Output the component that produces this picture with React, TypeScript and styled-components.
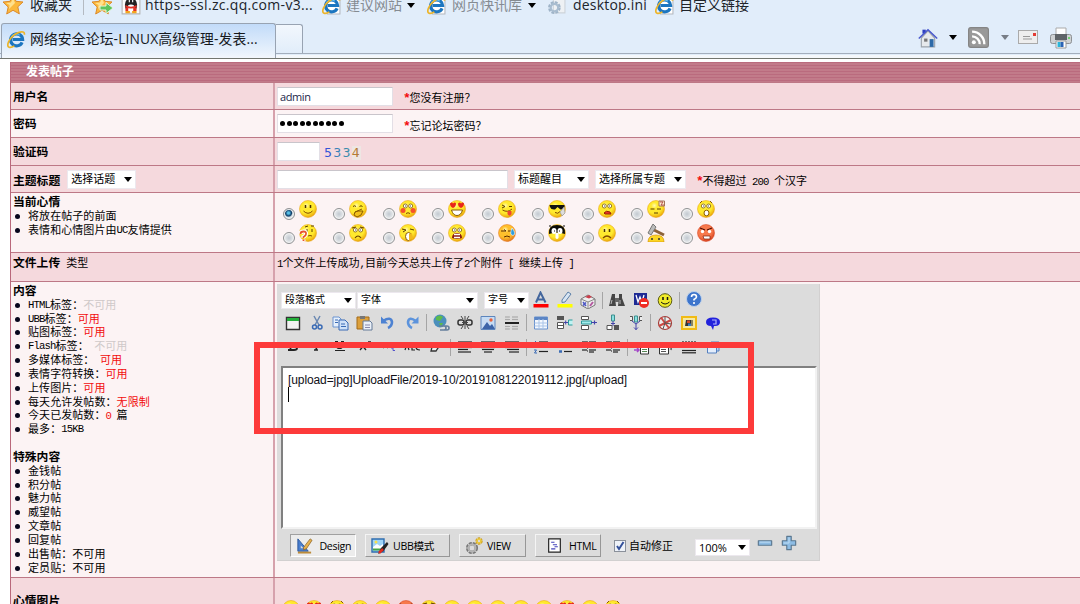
import React from 'react';
import styled, { createGlobalStyle } from 'styled-components';

const sans = '"Liberation Sans", "Noto Sans CJK SC", sans-serif';
const ui = '"Open Sans", "Noto Sans CJK SC", sans-serif';

const Global = createGlobalStyle`
  * { box-sizing: border-box; }
  body { margin: 0; background: #fff; overflow: hidden; }
  ul { margin: 0; padding: 0; list-style: none; }
`;

const Page = styled.div`
  position: relative;
  width: 1080px;
  height: 604px;
  overflow: hidden;
  display: flex;
  flex-direction: column;
  font: 11px/13.83px ${sans};
  color: #000;
`;

/* ---------- browser chrome ---------- */
const Chrome = styled.header`
  height: 59px;
  flex: none;
  display: flex;
  flex-direction: column;
  background: #e1edfa;
  border-bottom: 1px solid #72766f;
`;
const Bookmarks = styled.div`
  height: 23px;
  display: flex;
  padding-left: 3px;
  overflow: hidden;
`;
const Bookmark = styled.div<{ $w: number; $dim?: boolean; $gap?: number; $ls?: number }>`
  width: ${p => p.$w}px;
  flex: none;
  height: 20px;
  margin-top: -5px;
  display: flex;
  align-items: center;
  gap: ${p => p.$gap ?? 5}px;
  white-space: nowrap;
  font: 14px/20px ${ui};
  letter-spacing: ${p => p.$ls ?? 0}px;
  color: ${p => (p.$dim ? '#858b92' : '#20242a')};
  svg { flex: none; }
`;
const BarLine = styled.span`
  width: 1px;
  height: 15px;
  margin-right: 8px;
  background: #b4bac2;
`;
const Caret = styled.i<{ $c?: string }>`
  flex: none;
  width: 0;
  height: 0;
  border: 4.5px solid transparent;
  border-top: 5px solid ${p => p.$c ?? '#000'};
  border-bottom: 0;
`;
const TabBar = styled.div`
  height: 31px;
  display: flex;
  border-bottom: 1px solid #a3aebc;
`;
const Tab = styled.div`
  width: 275px;
  height: 35px;
  margin-left: 1px;
  display: flex;
  align-items: center;
  gap: 4px;
  padding: 0 0 4px 5px;
  border: 1px solid #98a3b2;
  border-bottom: 0;
  border-radius: 3px 3px 0 0;
  background: linear-gradient(#c2dbf9, #e9f2fc 85%, #f3f7fc);
  font: 13.8px/20px ${ui};
  letter-spacing: 0.13px;
  color: #16191d;
  white-space: nowrap;
`;
const NewTab = styled.div`
  width: 27px;
  height: 29px;
  margin-top: 1px;
  border: 1px solid #98a3b2;
  border-left: 0;
  border-bottom: 0;
  border-radius: 0 3px 0 0;
  background: linear-gradient(#f2f7fd, #e1edfa);
`;
const Commands = styled.div`
  margin-left: auto;
  display: flex;
  align-items: center;
  height: 29px;
  padding-right: 8px;
`;
const Spacer = styled.span<{ $w: number }>`
  flex: none;
  width: ${p => p.$w}px;
`;
const UnderTabs = styled.div`
  height: 3px;
  margin: 1px 0 0 276px;
  background: #f5f8fb;
`;

/* ---------- form table ---------- */
const Form = styled.main`
  margin: 3px 0 0 10px;
  border-left: 1px solid #b9687b;
  flex: 1;
  min-height: 0;
`;
const Banner = styled.div`
  height: 20px;
  padding-left: 15px;
  font: bold 12px/20px ${sans};
  color: #fff;
  background: repeating-linear-gradient(#ba6b7e 0 1px, #c27b8a 1px 3px);
`;
const Row = styled.div<{ $h: number; $dark?: boolean }>`
  height: ${p => p.$h}px;
  display: flex;
  border-top: 1px solid #bd7886;
  background: ${p => (p.$dark ? '#f5d9dd' : '#fcf3f4')};
  overflow: hidden;
`;
const Left = styled.div<{ $top?: number }>`
  width: 264px;
  flex: none;
  padding: ${p => p.$top ?? 3}px 0 0 2px;
  border-right: 2px solid #d6a1ac;
  white-space: nowrap;
`;
const Right = styled.div<{ $top?: number }>`
  display: flex;
  align-items: flex-start;
  padding: ${p => p.$top ?? 4}px 0 0 2px;
  white-space: nowrap;
`;
const Label = styled.div<{ $inline?: boolean }>`
  display: ${p => (p.$inline ? 'inline-block' : 'block')};
  font: bold 11.8px/13.83px ${sans};
`;
const LabelLine = styled.div`
  display: flex;
  gap: 7px;
`;
const Item = styled.li`
  display: flex;
  height: 13.83px;
  white-space: pre;
  letter-spacing: 0.07px;
  &::before {
    content: '';
    width: 5px;
    height: 5px;
    margin: 4px 8px 0 2px;
    border-radius: 50%;
    background: #06061c;
  }
`;
const Half = styled.span`
  font-family: "Liberation Mono", monospace;
  font-size: 10.6px;
  letter-spacing: -0.86px;
  white-space: pre;
`;
const Star1 = styled(Half)`
  font-size: 13px;
  font-weight: bold;
  letter-spacing: -2.3px;
  color: #f20d0d;
  margin-right: 1px;
`;
const Red = styled.span` color: #f20d0d; `;
const Grey = styled.span` color: #cfc9c9; `;
const Note = styled.span<{ $l: number; $t?: number }>`
  margin: ${p => p.$t ?? 5}px 0 0 ${p => p.$l}px;
  white-space: pre;
`;
const Field = styled.div<{ $w: number }>`
  width: ${p => p.$w}px;
  height: 19px;
  flex: none;
  display: flex;
  align-items: center;
  gap: 1.5px;
  padding-left: 2px;
  background: #fff;
  border: 1px solid #e3dfe6;
  border-top-color: #c9c5cb;
  font: 11px/17px "Open Sans", sans-serif;
  letter-spacing: -0.4px;
  color: #22264a;
`;
const Dot = styled.i`
  width: 5px;
  height: 5px;
  border-radius: 50%;
  background: #000;
`;
const Select = styled.div<{ $w: number; $h?: number; $l?: number; $fs?: number }>`
  width: ${p => p.$w}px;
  height: ${p => p.$h ?? 19}px;
  margin-left: ${p => p.$l ?? 0}px;
  flex: none;
  display: flex;
  align-items: center;
  justify-content: space-between;
  padding: 0 3px;
  background: #fff;
  border: 1px solid #ece8ee;
  font-size: ${p => p.$fs ?? 11}px;
  white-space: nowrap;
`;
const Zoom = styled.span` font: 11px/15px "Open Sans", sans-serif; `;
const Captcha = styled.span`
  display: flex;
  margin: 4px 0 0 4px;
  font: 12.5px/14px "DejaVu Sans", sans-serif;
  letter-spacing: 1.3px;
`;
const Digit = styled.span<{ $c: string; $bg?: string }>`
  color: ${p => p.$c};
  background: ${p => p.$bg ?? 'transparent'};
`;

/* ---------- moods ---------- */
const Moods = styled.div`
  display: grid;
  grid-template-columns: repeat(9, 49.75px);
  grid-auto-rows: 24px;
  padding-left: 6px;
`;
const Mood = styled.label`
  display: flex;
  gap: 4px;
`;
const Radio = styled.i<{ $on?: boolean }>`
  width: 12px;
  height: 12px;
  margin-top: 8px;
  border: 1px solid #8f9193;
  border-radius: 50%;
  background: ${p => (p.$on ? 'radial-gradient(circle at 45% 40%, #58c0e8 0 1px, #0b3a66 3px, #dfe5ea 4.3px)' : 'radial-gradient(#c2c9d0, #e2e5e8 55%, #fff)')};
  box-shadow: inset 0 0 0 1px #f4f4f4;
`;
const FaceStrip = styled.div`
  display: flex;
  gap: 5px;
  padding-left: 5px;
`;

/* ---------- editor ---------- */
const Editor = styled.section`
  width: 543px;
  height: 277px;
  padding: 6px 3px 0 4px;
  background: #dcdcdc;
  border: 1px solid #d2d0d0;
  border-width: 0 1px 1px 0;
`;
const Tools = styled.div<{ $h: number }>`
  height: ${p => p.$h}px;
  display: flex;
  align-items: center;
`;
const Cell = styled.span`
  width: 23.8px;
  flex: none;
  display: flex;
  justify-content: center;
`;
const Sep = styled.span`
  width: 1px;
  height: 17px;
  margin: 0 2.2px 0 2px;
  flex: none;
  background: #a5a5a5;
`;
const Writing = styled.div`
  width: 536px;
  height: 163px;
  margin-top: 7px;
  padding: 5px 0 0 5px;
  background: #fff;
  border: 2px solid #808080;
  border-right: 2px solid #f2f2f2;
  border-bottom: 2px solid #f2f2f2;
  font: 12px/14px "Liberation Sans", sans-serif;
  letter-spacing: -0.1px;
  color: #101018;
`;
const TextCursor = styled.div`
  width: 1px;
  height: 15px;
  background: #000;
`;
const Modes = styled.footer`
  display: flex;
  align-items: flex-start;
  padding: 5px 0 0 9px;
`;
const ModeButton = styled.div<{ $w: number; $l?: number; $pressed?: boolean }>`
  width: ${p => p.$w}px;
  height: 23px;
  margin-left: ${p => p.$l ?? 0}px;
  display: flex;
  align-items: center;
  gap: 4px;
  padding-left: 5px;
  font: 10.6px/20px "Open Sans", "Noto Sans CJK SC", sans-serif;
  letter-spacing: -0.3px;
  background: ${p => (p.$pressed ? '#ececec' : '#dcdcdc')};
  border: 1px solid;
  border-color: ${p => (p.$pressed ? '#a0a0a0 #fff #fff #a0a0a0' : '#f4f4f4 #979797 #979797 #f4f4f4')};
`;
const Check = styled.span`
  width: 12px;
  height: 12px;
  margin: 6px 3px 0 13px;
  background: #eef2f8;
  border: 1px solid #8a909a;
  display: flex;
`;
const Highlight = styled.div`
  position: absolute;
  left: 254px;
  top: 342px;
  width: 500px;
  height: 92px;
  border: 6px solid #fd3a3a;
`;

/* ---------- drawings ---------- */
const Svg = ({ s = 18, h, children }: { s?: number; h?: number; children: React.ReactNode }) => (
  <svg width={s} height={h ?? s} viewBox={`0 0 18 ${h ? (18 * h) / s : 18}`} fill="none">{children}</svg>
);

const Star = ({ arrow }: { arrow?: boolean }) => (
  <svg width="22" height="22" viewBox="0 0 22 22">
    <path d="M10 1l3 6.300 7 .7-5.200 4.800 1.500 7L10 16.300 3.700 20l1.500-7L0 8l7-.7z" fill="#fbb83c" stroke="#dc8a2a" />
    <path d="M10 4l2 5-6 6 .5-4L3 9l5-.6z" fill="#ffe08c" />
    {arrow && <path d="M8 12h6V8.500l7 5.500-7 5.500V16H8z" fill="#5ec45c" stroke="#e4f6df" />}
  </svg>
);

const IE = ({ s = 19, page }: { s?: number; page?: boolean }) => (
  <Svg s={s}>
    {page && <path d="M5 1h12v16H5z" fill="#fff" stroke="#b3b8be" />}
    <path d="M14.300 11.700A5.700 5.700 0 1 1 14.800 9H5.500" stroke="#1c76c0" strokeWidth="3" />
    <path d="M4 7a5 5 0 0 1 8-2" stroke="#62bdf0" strokeWidth="1.200" />
    <path d="M16.500 4.500C17 .5 12 1 7 4.500S-1 15 2 16.300c1.500.6 3.500-.3 5-1.300" stroke="#ecb52b" strokeWidth="1.600" />
  </Svg>
);

const Penguin = () => (
  <Svg s={20}>
    <path d="M1 0h16v17H1z" fill="#fafafa" stroke="#b5b5b5" />
    <ellipse cx="9" cy="9" rx="5.500" ry="6.500" fill="#222" />
    <ellipse cx="9" cy="12" rx="3.500" ry="3.500" fill="#fff" />
    <path d="M4 9q5 3 10 0v2q-5 2.500-10 0z" fill="#e33225" />
    <path d="M11 11.500h3v3h-3zM4 11.500h2.500v3H4z" fill="#e33225" />
    <path d="M4 15.500h4M10 15.500h4" stroke="#f3a51e" strokeWidth="2" />
    <path d="M7 5.500h1M10 5.500h1" stroke="#fff" strokeWidth="2" />
  </Svg>
);

const Gear = () => (
  <Svg s={19}>
    <path d="M6 1h11v15H6z" fill="#eef1f4" stroke="#cdd3d9" />
    <circle cx="7" cy="11" r="4.500" stroke="#9fb4c8" strokeWidth="3" strokeDasharray="2.500 1" />
    <circle cx="7" cy="11" r="3.500" stroke="#a9bdd0" strokeWidth="2" />
  </Svg>
);

const House = () => (
  <Svg s={20}>
    <path d="M4 1.500h3V5H4z" fill="#2d3fc0" />
    <path d="M3 9l6-6.500L15 9v8H3z" fill="#e6e9ec" stroke="#9ba2aa" />
    <path d="M.7 9.500L9 1.500l8.300 8" stroke="#4756cc" strokeWidth="1.300" />
    <path d="M10.500 10h3.500v7h-3.500z" fill="#2d6aa8" />
    <path d="M5.500 9.500h3v2.800h-3z" fill="#777" />
  </Svg>
);

const Feed = () => (
  <Svg s={21}>
    <rect x=".5" y=".5" width="17" height="17" rx="2" fill="#999" stroke="#858585" />
    <circle cx="5" cy="13" r="1.700" fill="#fff" />
    <path d="M3.500 8a6.500 6.500 0 0 1 6.500 6.700M3.500 4A10.600 10.600 0 0 1 14 14.700" stroke="#fff" strokeWidth="2" />
  </Svg>
);

const Mail = () => (
  <svg width="20" height="15" viewBox="0 0 20 15">
    <rect x=".5" y=".5" width="19" height="13" fill="#eee" stroke="#aaa" />
    <path d="M5 6.500h7M5 9h9" stroke="#999" />
    <path d="M15 3h3v3h-3z" fill="#e33b33" />
  </svg>
);

const Printer = () => (
  <svg width="22" height="22" viewBox="0 0 22 22">
    <path d="M6 1h10v7H6z" fill="#fff" stroke="#aaa" />
    <rect x=".5" y="7.500" width="21" height="9" rx="2" fill="#cfd2d4" stroke="#8d9194" />
    <path d="M5 7h12v6H5z" fill="#5f6468" />
    <path d="M6 14h10v7H6z" fill="#fff" stroke="#999" />
    <path d="M7.500 15h3v5h-3z" fill="#2bb4d8" /><path d="M10.500 15h3v5h-3z" fill="#2a62b4" />
    <circle cx="19" cy="11" r="1" fill="#51d350" />
  </svg>
);

type FaceKind = 'smile' | 'giggle' | 'shy' | 'love' | 'tongue' | 'cool' | 'lick' | 'sleep' | 'shock'
  | 'ask' | 'sad' | 'yawn' | 'cry' | 'sweat' | 'dark' | 'frown' | 'hammer' | 'angry';

const eyesDots = <path d="M6.500 5v3M11.500 5v3" stroke="#4a3200" strokeWidth="1.500" />;
const eyesShut = <path d="M4 6.500q1.500-1.500 3 0M10.500 6.500q1.500-1.500 3 0" stroke="#5a3c00" />;
const eyesWide = <g fill="#fff" stroke="#7a5a10" strokeWidth=".8"><circle cx="6.300" cy="6" r="2" /><circle cx="11.700" cy="6" r="2" /><path d="M6.500 5.500v1M11.500 5.500v1" stroke="#222" /></g>;

const features: Record<FaceKind, React.ReactNode> = {
  smile: <>{eyesDots}<path d="M4.500 11q4.500 4.500 9 0" stroke="#804800" /></>,
  giggle: <>{eyesShut}<path d="M6 12l7-3M5 15q0-4 4-4h5q-1 5-6 6z" fill="#f2c01c" stroke="#8a5a00" /></>,
  shy: <>{eyesWide}<circle cx="4" cy="10.500" r="2.500" fill="#f5512c" /><circle cx="14" cy="10.500" r="2.500" fill="#f5512c" /><path d="M7 13.500q2-1.500 4 0" stroke="#804800" /></>,
  love: <><path d="M2 3.500q2-2 3 0 2-2 3 0 0 3-3 4.500-3-1.500-3-4.500zM10 3.500q2-2 3 0 2-2 3 0 0 3-3 4.500-3-1.500-3-4.500z" fill="#e8251b" /><path d="M3.500 10h11q-1.500 5.500-5.500 5.500T3.500 10z" fill="#fff" stroke="#8a5a00" /></>,
  tongue: <><path d="M4 5l3 1.500L4 8M11 6.500h3" stroke="#5a3c00" /><path d="M4.500 10q5 3 9.500-1" stroke="#804800" /><path d="M9.500 11h4v3q-2 3.500-4 0z" fill="#f0452f" /></>,
  cool: <><path d="M1.500 5h15v2q-1 3-4 2.500L9.500 7 7 9.500q-4 .5-5-2.500z" fill="#111" /><path d="M7 12.500q3 2 5-1" stroke="#804800" /><path d="M12 12l4-5 1 6-3 3z" fill="#ddd" stroke="#999" strokeWidth=".7" /></>,
  lick: <>{eyesWide}<path d="M6 13q2-3 6-1l1 2H7z" fill="#e9352a" stroke="#942200" /></>,
  sleep: <><path d="M3.500 9h4M10 9h4M7 13h4" stroke="#5a3c00" /><path d="M12 1h5.500v5H12z" fill="#fff0d0" stroke="#a2735a" /><path d="M13 2h3l-2 3h3" stroke="#a33" strokeWidth=".8" /></>,
  shock: <>{eyesWide}<ellipse cx="9.500" cy="13" rx="2.500" ry="2.800" fill="#fff" stroke="#8a5a00" /><path d="M3 3l2-2M13 1l2 2" stroke="#8a5a00" /></>,
  ask: <><path d="M8 5v3M13 5v3M6 3l3-1M12 2h3" stroke="#5a3c00" /><path d="M9 12q2-1 4 0" stroke="#804800" /><path d="M1.500 10q0-2.500 3-2.500T7 10q0 1.500-2.500 3v1M4.500 15.500V17" stroke="#fff" strokeWidth="4" /><path d="M1.500 10q0-2.500 3-2.500T7 10q0 1.500-2.500 3v1M4.500 15.500V17" stroke="#e8542c" strokeWidth="1.800" /></>,
  sad: <>{eyesWide}<path d="M3 4l4-1M11 3l4 1M6 14q3-4 6 0" stroke="#6b4300" strokeWidth="1.200" /></>,
  yawn: <><path d="M3 5l4 1-3 2M11 5l4 1" stroke="#5a3c00" /><ellipse cx="9.500" cy="12.500" rx="3" ry="4" fill="#fff" stroke="#8a5a00" /><path d="M10 10l3-1 1 5-4 3z" fill="#f1b91d" /></>,
  cry: <>{eyesWide}<path d="M4 14q0-5 5-5t5 5q-5 2-10 0z" fill="#8c1c12" /><path d="M6 10.500h6M6 13.500h6" stroke="#fff" strokeWidth="1.300" /></>,
  sweat: <><path d="M3 7h5l-2-1.500M10 7h4M6 13q3-2 6 0" stroke="#5a2c00" /><path d="M14 4q5 6 1 7.500Q11 11 14 4z" fill="#2d9dde" stroke="#fff" strokeWidth=".6" /></>,
  dark: <><path d="M1 10Q0 1 9 1t8 9q-8-3-16 0z" fill="#0c0c08" /><path d="M2 3V1M16 3V1" stroke="#111" /><ellipse cx="6" cy="7" rx="2.500" ry="3" fill="#fff" /><ellipse cx="12" cy="7" rx="2.500" ry="3" fill="#fff" /><path d="M7.500 9h3v5q-1.500 2-3 0z" fill="#fff" /><path d="M6.500 6.500v1M11.500 6.500v1" stroke="#111" /></>,
  frown: <>{eyesDots}<path d="M5 14q4-4 8 0" stroke="#804800" strokeWidth="1.200" /></>,
  hammer: null,
  angry: <><path d="M3 4l5 2M15 4l-5 2" stroke="#4d0d00" strokeWidth="1.300" /><circle cx="5.500" cy="7.500" r="1.700" fill="#fff" /><circle cx="12.500" cy="7.500" r="1.700" fill="#fff" /><path d="M6 12h7v3H7z" fill="#fff" stroke="#7c1c08" strokeWidth=".7" /></>,
};

const Face = ({ kind }: { kind: FaceKind }) => {
  if (kind === 'hammer') {
    return (
      <Svg>
        <path d="M1 18q0-7 8-7t8 7z" fill="#fbd524" stroke="#d9950b" strokeWidth=".7" />
        <path d="M5 16v-2M12 16v-2" stroke="#333" strokeWidth="1.500" />
        <path d="M5 5l12 6" stroke="#8d6239" strokeWidth="3" />
        <path d="M6 0l3 3-5 8-3-2z" fill="#bbb" stroke="#777" />
      </Svg>
    );
  }
  const tone = kind === 'angry' ? ['#f7794c', '#d33a18'] : kind === 'sweat' ? ['#ffc02c', '#e0701a'] : ['#ffe92e', '#e79c06'];
  return (
    <Svg>
      <defs>
        <radialGradient id={`tone-${kind}`} cx=".4" cy=".3" r=".75">
          <stop offset="0" stopColor={kind === 'angry' ? tone[0] : '#fffab0'} /><stop offset=".25" stopColor={tone[0]} /><stop offset=".6" stopColor={tone[0]} /><stop offset="1" stopColor={tone[1]} />
        </radialGradient>
      </defs>
      <circle cx="9" cy="9" r="8.500" fill={`url(#tone-${kind})`} stroke={tone[1]} strokeWidth=".5" />
      {features[kind]}
    </Svg>
  );
};

const blue = '#3a6bb5';
const lines = (xs: number[][], c = '#222') => <g stroke={c} strokeWidth="1.200">{xs.map(([x1, x2, y], i) => <path key={i} d={`M${x1} ${y}H${x2}`} />)}</g>;

const icons: Record<string, React.ReactNode> = {
  color: <><path d="M4 11.500L8.500 1.500 13.500 11.500M5.500 8.500h6.500" stroke="#44679d" strokeWidth="2" /><path d="M1.500 13h15v3.500h-15z" fill="#f00" /></>,
  marker: <><path d="M6 9l6-8 3 2-6 8-3 .5z" fill="#d8e5f2" stroke="#5b7fa8" /><path d="M1.500 13h15v3.500h-15z" fill="#ff0" /></>,
  dice: <><path d="M2 8l7-4 7 4v6l-7 4-7-4z" fill="#eee" stroke="#777" /><path d="M2 8l7 3v7M9 11l7-3" stroke="#888" /><path d="M6 6l4-2 3 2-3 1.500z" fill="#cc3d4a" /><path d="M4 11l3 4M4 14.500l3-3" stroke="#4b55c4" strokeWidth="1.500" /><path d="M11 15l3-4" stroke="#b45aa0" strokeWidth="2" /></>,
  find: <><path d="M4 3h3v4l1 8H1l2-8zM11 3h3v4l3 8h-7l1-8z" fill="#454545" /><path d="M7 7h4v4H7z" fill="#666" /><path d="M4 9l-1 4M12 9v4" stroke="#bbb" /></>,
  word: <><path d="M2 2h13v12H2z" fill="#1d2a94" /><path d="M4 4l2 7 2-5 2 5 2-7" stroke="#fff" strokeWidth="1.300" /><circle cx="12" cy="12" r="5" fill="#ef2b23" /><path d="M9 12h6" stroke="#fff" strokeWidth="2" /></>,
  smiley: <><circle cx="9" cy="9.500" r="6.800" fill="#f0eb2a" stroke="#5a5a10" /><path d="M7 6v3M11.500 6v3" stroke="#111" strokeWidth="1.500" /><path d="M5 11q4 4 8.500 0" stroke="#111" /></>,
  help: <><circle cx="9" cy="8" r="7.500" fill="#3d75cc" stroke="#bcd0ea" /><path d="M6.500 6q0-2.500 2.500-2.500T11.500 6q0 1-2.500 2.500v1M9 11v2" stroke="#fff" strokeWidth="1.600" /></>,
  window: <><path d="M2.500 3.500h13v12h-13z" fill="#f2f2f2" stroke="#333" strokeWidth="1.400" /><path d="M3 4h12v3H3z" fill="#23b03a" /></>,
  cut: <><path d="M6 2l5 9M12 2L7 11" stroke="#6a88b2" strokeWidth="1.500" /><circle cx="6.500" cy="13" r="2" stroke={blue} strokeWidth="1.500" /><circle cx="12" cy="13" r="2" stroke={blue} strokeWidth="1.500" /></>,
  copy: <><path d="M2 3h6l2 2v8H2z" fill="#e6f0fc" stroke="#6b93d0" /><path d="M8 6h6l3 3v7H8z" fill="#cfe1f8" stroke={blue} /><path d="M10 10h4M10 12.500h5M4 6h3M4 8.500h3" stroke={blue} /></>,
  paste: <><path d="M2 3h12v12H2z" fill="#dca03c" stroke="#a36b18" /><path d="M5 2h5v3H5z" fill="#777" /><path d="M8 7h7l2 2v7H8z" fill="#eaf0f8" stroke="#657a98" /><path d="M10 11h5M10 13.500h5" stroke="#88a" /></>,
  undo: <><path d="M4 7q8-5 9 1 0 4-4 6" stroke="#4d82d2" strokeWidth="2.600" /><path d="M2 2.500V9.500h7z" fill="#4d82d2" /></>,
  redo: <><path d="M13 7Q6 2 5 8q0 4 4 6" stroke="#5c93dc" strokeWidth="2.600" /><path d="M15.500 2.500v7h-7z" fill="#5c93dc" /></>,
  link: <><circle cx="8" cy="7" r="6.500" fill="#4b8fbc" /><path d="M4 3q4-3 7 0l-3 4-4-1zM7 9l4 0-2 4z" fill="#5dbb4b" /><path d="M7 12h5a2 2 0 0 1 0 4H8M12 12h3a2 2 0 0 1 0 4h-2" stroke="#667f9c" strokeWidth="1.600" /></>,
  unlink: <><rect x="2" y="6" width="6" height="5" rx="2" stroke="#333" strokeWidth="1.500" /><rect x="10" y="6" width="6" height="5" rx="2" stroke="#333" strokeWidth="1.500" /><path d="M9 2v13M5 2l2 3M13 2l-2 3M5 15l2-3M13 15l-2-3M6 8.500h6" stroke="#444" /></>,
  image: <><path d="M2 2.500h14v13H2z" fill="#c7dcf3" stroke="#5c85bd" /><path d="M3 15l5-7 3 4 2-2 3 5z" fill="#3c64a8" /><circle cx="12" cy="6" r="1.700" fill="#e8623a" /></>,
  rule: <>{lines([[2, 7, 3], [9, 15, 3], [2, 7, 5.5], [9, 15, 5.5], [2, 7, 12.5], [9, 15, 12.5], [2, 7, 15], [9, 15, 15]], '#aaa')}<path d="M2 9h14" stroke="#222" strokeWidth="2" /></>,
  table: <><path d="M2.500 3h13v12h-13z" fill="#f4f8fe" stroke="#6790cd" /><path d="M3 4.500h12" stroke="#5b85c5" strokeWidth="3" /><path d="M2.500 9h13M2.500 12h13M7 5v10M11 5v10" stroke="#a9c4e8" /></>,
  colBefore: <><path d="M1 2h7v4H1z" fill="#555" /><path d="M1.500 8.500h6v6h-6zM1.500 11.500h6" fill="#fff" stroke="#555" /><path d="M16.500 6h-4v5h4" stroke="#2b9a9a" fill="#bdf3f3" /><path d="M8 8.500h4M9.700 6.500v4" stroke="#44a" /></>,
  colAfter: <><path d="M1.500 2.500h7v3h-7zM1.500 11.500h7v4h-7z" fill="#fff" stroke="#555" /><path d="M1.500 7h10v3h-10z" fill="#a5ecec" stroke="#2b9a9a" /><path d="M11 8.500h6M14.500 6.500v4" stroke="#44a" strokeWidth="1.200" /></>,
  split: <><path d="M7.500 1h3v6h-3z" fill="#8be0e0" stroke="#3a8e8e" /><path d="M9 7v5M7 9.500h4" stroke="#44a" /><path d="M3 11.500h5v4H3z" fill="#fff" stroke="#555" /><path d="M10 11h5v5h-5z" fill="#555" /></>,
  merge: <><path d="M3 2.500h2.500v4H3M15 2.500h-2.500v4H15" stroke="#555" fill="#eee" /><path d="M7.500 2h3v6h-3z" fill="#8be0e0" stroke="#3a8e8e" /><path d="M5 7l4 3 4-3M9 10v6M7 13.500l2 2 2-2" stroke="#44a" /></>,
  wheel: <><circle cx="9" cy="9" r="6.500" fill="#eee" stroke="#a33c38" strokeWidth="1.200" /><path d="M9 9L5 3.500M9 9l6-3M9 9l4 5M9 9l-6 3" stroke="#cc4a44" strokeWidth="2" /><path d="M9 9V3M9 9l6 1M9 9l-2 6" stroke="#555" /></>,
  media: <><path d="M2 3h14v12H2z" fill="#f6e9a0" stroke="#f1bb14" strokeWidth="2" /><path d="M6 6h5v6H5z" fill="#333" /><path d="M7 6.500h3V9H7z" fill="#d24b2b" /><path d="M8 9.500h3V12H8z" fill="#377ac5" /><path d="M12 6v6" stroke="#222" /></>,
  swirl: <><path d="M2 8q0-4.500 7-4.500T16 8t-6 4l-1 4-2-4Q2 12 2 8z" fill="#2222dc" /><path d="M8 6h4v4H9" stroke="#b4b4ff" strokeWidth="1.200" /></>,
  bold: <path d="M5 5h5q3 0 2.500 2t-3 2H6h4q3 0 3 1.500T10 12H4M6.500 5v7" stroke="#222" strokeWidth="1.800" />,
  italic: <path d="M7 5h5M9.500 5L8 12M6 12h4" stroke="#222" strokeWidth="1.600" />,
  under: <path d="M4 3.500h3M10 3.500h3M5.500 4v4q0 2.500 3 2.500t3-2.500V4M4 12.500h10" stroke="#222" strokeWidth="1.200" />,
  sup: <path d="M5 5l6 7M11 5l-6 7M13 4h3" stroke="#222" strokeWidth="1.300" />,
  sub: <><path d="M4 5l5 5M9 5l-5 5" stroke="#222" strokeWidth="1.200" /><path d="M12 10h2v2.500h2" stroke="#55c" /></>,
  strike: <path d="M2 12l2-6 2 6M9 6v6h3M17 7q-4-1-4 2t4 3M1 9h16" stroke="#222" strokeWidth="1.200" />,
  eraser: <path d="M5 9l4-4h6l-4 5-2 3H4z" fill="#eee" stroke="#333" strokeWidth="1.300" />,
  left: lines([[2, 16, 4], [2, 12, 6.5], [2, 16, 9.500], [2, 12, 11.5], [2, 15, 14]]),
  center: lines([[2, 16, 4], [4, 14, 6.5], [2, 16, 9.500], [3, 15, 11.5], [5, 13, 14]]),
  right: lines([[2, 16, 4], [6, 16, 6.5], [2, 16, 9.500], [4, 16, 11.5], [6, 16, 14]]),
  ol: <>{lines([[7, 16, 4], [7, 16, 9], [7, 16, 13.5]])}<path d="M3.500 3v3M2 12h2.500L2.500 15H5" stroke={blue} /></>,
  ul: <>{lines([[8, 16, 9], [8, 16, 13.5]])}<path d="M3 13.500h3" stroke={blue} strokeWidth="2.500" /></>,
  indent: <>{lines([[2, 7, 4], [9, 16, 4], [2, 7, 12], [9, 16, 12], [9, 14, 14]])}<path d="M7.500 3v12" stroke="#777" strokeDasharray="2 1" /></>,
  pageIn: <><path d="M7.500 5h8v11h-8z" fill="#fff" stroke="#333" /><path d="M9 11.500h5M9 13.500h5" stroke="#585" /><path d="M1 12h5M4 10l2 2-2 2" stroke="#a448c8" strokeWidth="1.500" /></>,
  pageOut: <><path d="M3.500 6h9v10h-9z" fill="#fff" stroke="#333" /><path d="M5 11.500h5M5 13.500h5" stroke="#555" /><path d="M12 8q4 0 3 4" stroke="#555" strokeWidth="1.500" /></>,
  ruler: <>{lines([[2, 16, 12.5], [2, 16, 14.8]])}<path d="M3 3v6M6 3v6M9 3v6M12 3v6M15 3v6" stroke="#333" strokeWidth="1.300" /></>,
  docs: <><path d="M7 4h8v9H7z" fill="#bcd3f2" stroke="#5580bf" /><path d="M3.500 8h9v7h-9z" fill="#e3edfb" stroke="#5580bf" /></>,
};

const Icon = ({ name }: { name: string }) => <Cell><Svg>{icons[name]}</Svg></Cell>;
const IconRun = ({ names }: { names: string }) => (
  <>{names.split(' ').map((n, i) => (n === '|' ? <Sep key={i} /> : <Icon key={i} name={n} />))}</>
);

const DesignArt = () => (
  <Svg s={17}><path d="M2 2v13h11z" fill="#4a7fd0" stroke="#28569c" /><path d="M5 9v3h3z" fill="#dcdcdc" /><path d="M8 11l7-9 2 1.500-6 9-3 1z" fill="#e8b24d" stroke="#8c6424" strokeWidth=".8" /><path d="M2 16.500h14" stroke="#bc8c3a" strokeWidth="2" /></Svg>
);
const UbbArt = () => (
  <Svg s={18}><path d="M1 2h12v13H1z" fill="#9ed4f8" stroke="#2f6eb0" strokeWidth="1.400" /><path d="M2 10l4-3 3 2 3-2v6H2z" fill="#fff" /><path d="M2 12.500h10" stroke="#44a448" strokeWidth="2" /><circle cx="5" cy="5" r="1.500" fill="#f7e04d" /><path d="M7 17l3-6 6-6 1.500 2-5 7z" fill="#222" /><path d="M8 16l4-4" stroke="#e12b20" strokeWidth="2.500" /></Svg>
);
const ViewArt = () => (
  <Svg s={18}><circle cx="7" cy="11" r="4.300" stroke="#777" strokeWidth="3.500" strokeDasharray="2.600 .8" /><circle cx="7" cy="11" r="3.500" stroke="#b4b4b4" strokeWidth="2" /><circle cx="14" cy="4" r="2.500" stroke="#c89a1c" strokeWidth="2.400" strokeDasharray="2 .6" /><circle cx="14" cy="4" r="2" stroke="#ecca3c" strokeWidth="1.500" /></Svg>
);
const HtmlArt = () => (
  <Svg s={15}><path d="M2 1h14v16H2z" fill="#fff" stroke="#222" strokeWidth="1.400" /><path d="M5 5h4M7 8h5M9 10.500h4M5 13h5" stroke="#44b" strokeWidth="1.300" /></Svg>
);
const Sign = ({ plus }: { plus?: boolean }) => (
  <Svg s={16}><path d={plus ? 'M6.500 1.500h5v5h5v5h-5v5h-5v-5h-5v-5h5z' : 'M1.500 6.500h15v5h-15z'} fill="#8dbce4" stroke="#5b7890" strokeWidth="1.300" strokeLinejoin="round" /><path d={plus ? 'M9 3v6h-6' : 'M3 8h12'} stroke="#c6e0f6" /></Svg>
);

/* ---------- content ---------- */
const moods: FaceKind[] = ['smile', 'giggle', 'shy', 'love', 'tongue', 'cool', 'lick', 'sleep', 'shock',
  'ask', 'sad', 'yawn', 'cry', 'sweat', 'dark', 'frown', 'hammer', 'angry'];
const strip: FaceKind[] = ['smile', 'love', 'shock', 'lick', 'smile', 'angry', 'sad', 'smile', 'smile', 'smile', 'smile', 'smile', 'love', 'smile', 'shock'];
const specials = ['金钱帖', '积分帖', '魅力帖', '威望帖', '文章帖', '回复帖', '出售帖：不可用', '定员贴：不可用'];

export default function App() {
  return (
    <Page>
      <Global />
      <Chrome>
        <Bookmarks>
          <Bookmark $w={80}><Star />收藏夹</Bookmark>
          <BarLine />
          <Bookmark $w={29}><Star arrow /></Bookmark>
          <Bookmark $w={201} $gap={4} $ls={0.32}><Penguin />https--ssl.zc.qq.com-v3...</Bookmark>
          <Bookmark $w={105} $dim><IE page />建议网站<Caret /></Bookmark>
          <Bookmark $w={120} $dim $gap={6}><IE page />网页快讯库<Caret /></Bookmark>
          <Bookmark $w={108} $gap={7} $ls={0.2}><Gear />desktop.ini</Bookmark>
          <Bookmark $w={110}><IE page />自定义链接</Bookmark>
        </Bookmarks>
        <TabBar>
          <Tab><IE s={19} />网络安全论坛-LINUX高级管理-发表...</Tab>
          <NewTab />
          <Commands>
            <House /><Spacer $w={11} /><Caret /><Spacer $w={11} />
            <Feed /><Spacer $w={12} /><Caret $c="#777d86" /><Spacer $w={9} />
            <Mail /><Spacer $w={12} /><Printer />
          </Commands>
        </TabBar>
        <UnderTabs />
      </Chrome>

      <Form>
        <Banner>发表帖子</Banner>
        <Row $h={27} $dark>
          <Left $top={8}><Label>用户名</Label></Left>
          <Right><Field $w={116}>admin</Field><Note $l={10}><Star1>*</Star1>您没有注册？</Note></Right>
        </Row>
        <Row $h={28}>
          <Left $top={8}><Label>密码</Label></Left>
          <Right>
            <Field $w={116}>{Array.from({ length: 10 }, (_, i) => <Dot key={i} />)}</Field>
            <Note $l={10} $t={6}><Star1>*</Star1>忘记论坛密码？</Note>
          </Right>
        </Row>
        <Row $h={28} $dark>
          <Left $top={8}><Label>验证码</Label></Left>
          <Right>
            <Field $w={43} />
            <Captcha><Digit $c="#3355d8">5</Digit><Digit $c="#3b82b8">3</Digit><Digit $c="#3b8cac">3</Digit><Digit $c="#b57a35" $bg="#eee6e3">4</Digit></Captcha>
          </Right>
        </Row>
        <Row $h={27} $dark>
          <Left $top={4}><LabelLine><Note $l={0} $t={5}><Label $inline>主题标题</Label></Note><Select $w={69}>选择话题<Caret /></Select></LabelLine></Left>
          <Right>
            <Field $w={231} />
            <Select $w={75} $l={6}>标题醒目<Caret /></Select>
            <Select $w={91} $l={6}>选择所属专题<Caret /></Select>
            <Note $l={10}><Star1>*</Star1>不得超过<Half> 200 </Half>个汉字</Note>
          </Right>
        </Row>
        <Row $h={60}>
          <Left><Label>当前心情</Label><ul><Item>将放在帖子的前面</Item><Item>表情和心情图片由<Half>UC</Half>友情提供</Item></ul></Left>
          <Right $top={7}>
            <Moods>{moods.map((m, i) => <Mood key={m}><Radio $on={i === 0} /><Face kind={m} /></Mood>)}</Moods>
          </Right>
        </Row>
        <Row $h={29} $dark>
          <Left $top={4}><Label $inline>文件上传</Label>&nbsp; 类型</Left>
          <Right><Note $l={0} $t={0}><Half>1</Half>个文件上传成功<Half>,</Half>目前今天总共上传了<Half>2</Half>个附件<Half> [ </Half>继续上传<Half> ]</Half></Note></Right>
        </Row>
        <Row $h={296}>
          <Left>
            <Label>内容</Label>
            <ul>
              <Item><Half>HTML</Half>标签：<Grey>不可用</Grey></Item>
              <Item><Half>UBB</Half>标签：<Red>可用</Red></Item>
              <Item>贴图标签：<Red>可用</Red></Item>
              <Item><Half>Flash</Half>标签：<Half> </Half><Grey>不可用</Grey></Item>
              <Item>多媒体标签：<Half> </Half><Red>可用</Red></Item>
              <Item>表情字符转换：<Red>可用</Red></Item>
              <Item>上传图片：<Red>可用</Red></Item>
              <Item>每天允许发帖数：<Red>无限制</Red></Item>
              <Item>今天已发帖数：<Red><Half>0</Half></Red><Half> </Half>篇</Item>
              <Item>最多：<Half>15KB</Half></Item>
            </ul>
            <br />
            <Label>特殊内容</Label>
            <ul>{specials.map(s => <Item key={s}>{s}</Item>)}</ul>
          </Left>
          <Right $top={2}>
            <Editor>
              <Tools $h={20}>
                <Select $w={75} $h={17} $fs={10}>段落格式<Caret /></Select>
                <Select $w={121} $h={17} $l={1} $fs={10}>字体<Caret /></Select>
                <Select $w={45} $h={17} $l={6} $fs={10}>字号<Caret /></Select>
                <IconRun names="color marker dice | find word smiley | help" />
              </Tools>
              <Tools $h={25}><IconRun names="window cut copy paste undo redo | link unlink image rule | table colBefore colAfter split merge | wheel media swirl" /></Tools>
              <Tools $h={24}><IconRun names="bold italic under sup sub strike eraser | left center right | ol ul indent indent | pageIn pageOut ruler docs" /></Tools>
              <Writing>
                [upload=jpg]UploadFile/2019-10/2019108122019112.jpg[/upload]
                <TextCursor />
              </Writing>
              <Modes>
                <ModeButton $w={66} $pressed><DesignArt />&nbsp;Design</ModeButton>
                <ModeButton $w={85} $l={9}><UbbArt />UBB模式</ModeButton>
                <ModeButton $w={67} $l={9}><ViewArt />VIEW</ModeButton>
                <ModeButton $w={66} $l={9}>&nbsp;<HtmlArt />&nbsp;HTML</ModeButton>
                <Check><svg width="10" height="10" viewBox="0 0 10 10"><path d="M2 5l2 3 4.500-7" stroke="#33509a" strokeWidth="2" fill="none" /></svg></Check>
                <Note $l={0} $t={6}>自动修正</Note>
                <Spacer $w={22} />
                <Note $l={0} $t={5}><Select $w={55} $h={17}><Zoom>100%</Zoom><Caret /></Select></Note>
                <Spacer $w={7} /><Note $l={0} $t={1}><Sign /></Note>
                <Spacer $w={8} /><Note $l={0} $t={1}><Sign plus /></Note>
              </Modes>
            </Editor>
          </Right>
        </Row>
        <Row $h={60} $dark>
          <Left $top={17}><Label>心情图片</Label></Left>
          <Right $top={22}><FaceStrip>{strip.map((k, i) => <Face key={i} kind={k} />)}</FaceStrip></Right>
        </Row>
      </Form>
      <Highlight />
    </Page>
  );
}
